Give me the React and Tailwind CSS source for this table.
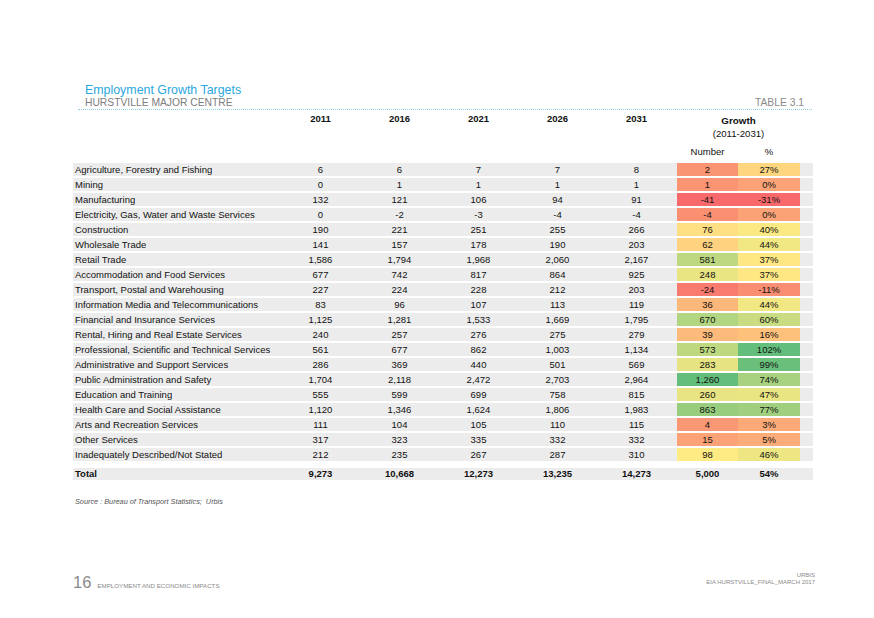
import React from 'react'

const years = ['2011', '2016', '2021', '2026', '2031']

// label, 2011..2031, growth number, growth %, colour of number cell, colour of % cell
const rows = [
  ['Agriculture, Forestry and Fishing', '6', '6', '7', '7', '8', '2', '27%', 'bg-[#FA9573]', 'bg-[#FED680]'],
  ['Mining', '0', '1', '1', '1', '1', '1', '0%', 'bg-[#FA9473]', 'bg-[#FBA376]'],
  ['Manufacturing', '132', '121', '106', '94', '91', '-41', '-31%', 'bg-[#F8696B]', 'bg-[#F8696B]'],
  ['Electricity, Gas, Water and Waste Services', '0', '-2', '-3', '-4', '-4', '-4', '0%', 'bg-[#FA8F72]', 'bg-[#FBA376]'],
  ['Construction', '190', '221', '251', '255', '266', '76', '40%', 'bg-[#FEE082]', 'bg-[#FBEA84]'],
  ['Wholesale Trade', '141', '157', '178', '190', '203', '62', '44%', 'bg-[#FED27F]', 'bg-[#F1E783]'],
  ['Retail Trade', '1,586', '1,794', '1,968', '2,060', '2,167', '581', '37%', 'bg-[#BDD880]', 'bg-[#FFE883]'],
  ['Accommodation and Food Services', '677', '742', '817', '864', '925', '248', '37%', 'bg-[#EAE583]', 'bg-[#FFE883]'],
  ['Transport, Postal and Warehousing', '227', '224', '228', '212', '203', '-24', '-11%', 'bg-[#F97A6E]', 'bg-[#FA8E72]'],
  ['Information Media and Telecommunications', '83', '96', '107', '113', '119', '36', '44%', 'bg-[#FCB77A]', 'bg-[#F1E783]'],
  ['Financial and Insurance Services', '1,125', '1,281', '1,533', '1,669', '1,795', '670', '60%', 'bg-[#B1D580]', 'bg-[#CADC81]'],
  ['Rental, Hiring and Real Estate Services', '240', '257', '276', '275', '279', '39', '16%', 'bg-[#FCBA7B]', 'bg-[#FDC17C]'],
  ['Professional, Scientific and Technical Services', '561', '677', '862', '1,003', '1,134', '573', '102%', 'bg-[#BED880]', 'bg-[#63BE7B]'],
  ['Administrative and Support Services', '286', '369', '440', '501', '569', '283', '99%', 'bg-[#E5E382]', 'bg-[#6AC07B]'],
  ['Public Administration and Safety', '1,704', '2,118', '2,472', '2,703', '2,964', '1,260', '74%', 'bg-[#63BE7B]', 'bg-[#A8D27F]'],
  ['Education and Training', '555', '599', '699', '758', '815', '260', '47%', 'bg-[#E8E483]', 'bg-[#EAE583]'],
  ['Health Care and Social Assistance', '1,120', '1,346', '1,624', '1,806', '1,983', '863', '77%', 'bg-[#98CD7E]', 'bg-[#A0D07F]'],
  ['Arts and Recreation Services', '111', '104', '105', '110', '115', '4', '3%', 'bg-[#FA9774]', 'bg-[#FBA977]'],
  ['Other Services', '317', '323', '335', '332', '332', '15', '5%', 'bg-[#FBA276]', 'bg-[#FCAC78]'],
  ['Inadequately Described/Not Stated', '212', '235', '267', '287', '310', '98', '46%', 'bg-[#FEEB84]', 'bg-[#EDE683]'],
]

const total = ['9,273', '10,668', '12,273', '13,235', '14,273']

function Row({ r }) {
  return (
    <div className="flex h-[13px] items-center bg-[#ececec]">
      <div className="w-[208px] pl-[2px] whitespace-nowrap">{r[0]}</div>
      {r.slice(1, 6).map((v, i) => (
        <div key={i} className="w-[79px] text-center">{v}</div>
      ))}
      <div className="w-[1px]" />
      <div className={`w-[61px] h-full flex items-center justify-center ${r[8]}`}>{r[6]}</div>
      <div className={`w-[62px] h-full flex items-center justify-center ${r[9]}`}>{r[7]}</div>
    </div>
  )
}

export default function App() {
  return (
    <div className="w-[874px] h-[618px] bg-white font-['Liberation_Sans',Arial,sans-serif] text-[#111]">
      <div className="pt-[83.5px]">
        <div className="ml-[85px] text-[12.4px] leading-[13px] text-[#2aa8dc]">Employment Growth Targets</div>
        <div className="ml-[78px] w-[734px] flex justify-between border-b border-dotted border-[#8fd2e4] pl-[7px] pr-[8px] text-[10.3px] leading-[12px] text-[#7d7d7d]">
          <span>HURSTVILLE MAJOR CENTRE</span>
          <span className="text-[#8a8a8a]">TABLE 3.1</span>
        </div>
      </div>

      <div className="ml-[73px] w-[740px] text-[9.5px]">
        {/* column heads */}
        <div className="flex items-start leading-[12px]">
          <div className="w-[208px]" />
          {years.map(y => (
            <div key={y} className="w-[79px] pt-[3px] text-center font-bold">{y}</div>
          ))}
          <div className="w-[1px]" />
          <div className="w-[123px] flex flex-col items-center">
            <div className="pt-[5px] font-bold text-[9.8px]">Growth</div>
            <div className="mt-[1.3px] text-[9.6px]">(2011-2031)</div>
            <div className="mt-[6.3px] flex w-full">
              <div className="w-[61px] text-center">Number</div>
              <div className="w-[62px] text-center">%</div>
            </div>
          </div>
        </div>

        <div className="mt-[5.2px] flex flex-col gap-[2px] leading-[12px]">
          {rows.map(r => <Row key={r[0]} r={r} />)}
        </div>

        <div className="mt-[6.5px] flex h-[12px] items-center bg-[#ececec] font-bold leading-[12px]">
          <div className="w-[208px] pl-[2px]">Total</div>
          {total.map((v, i) => (
            <div key={i} className="w-[79px] text-center">{v}</div>
          ))}
          <div className="w-[1px]" />
          <div className="w-[61px] text-center">5,000</div>
          <div className="w-[62px] text-center">54%</div>
        </div>

        <div className="mt-[17.7px] pl-[2px] text-[7.3px] leading-[10px] italic text-[#555]">
          Source : Bureau of Transport Statistics;&nbsp; Urbis
        </div>
      </div>

      <div className="mt-[65px] ml-[73px] w-[742px] flex justify-between items-start text-[#8a8a8a]">
        <div className="pt-[2px] flex items-baseline">
          <span className="text-[16.5px] leading-[16px]">16</span>
          <span className="ml-[6px] text-[6.2px]">EMPLOYMENT AND ECONOMIC IMPACTS</span>
        </div>
        <div className="text-right text-[6px] leading-[7px]">
          <div>URBIS</div>
          <div>EIA HURSTVILLE_FINAL_MARCH 2017</div>
        </div>
      </div>
    </div>
  )
}
